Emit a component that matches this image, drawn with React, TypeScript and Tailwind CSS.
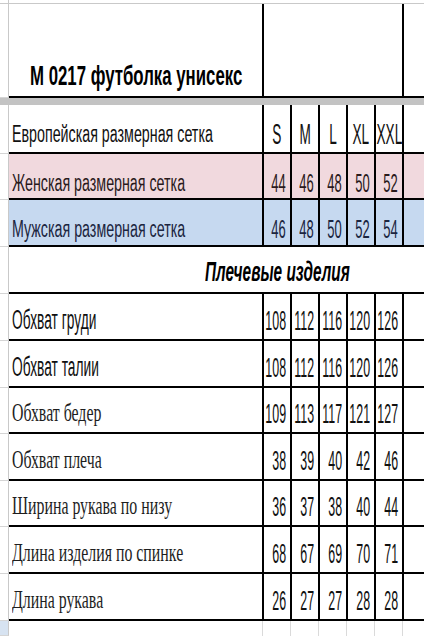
import React from "react";

type Kind = "arial" | "serif";

const SANS = "font-['Liberation_Sans',Arial,sans-serif]";
const SERIF = "font-['Liberation_Serif','Times_New_Roman',serif]";

function Gutter({ blue = false }: { blue?: boolean }) {
  return (
    <div
      className={
        "w-[9px] shrink-0 border-r border-r-[#c9c9c9] border-b border-b-[#d5d5d5] " +
        (blue ? "bg-[#d7e3f1]" : "bg-white")
      }
    />
  );
}

function NumCell({ v, pb, cls }: { v: string; pb: string; cls: string }) {
  return (
    <div className={"w-[28px] shrink-0 border-l-2 border-black flex items-end justify-end pr-[4px] " + pb}>
      <span className={"inline-block whitespace-nowrap leading-none origin-right " + cls}>{v}</span>
    </div>
  );
}

const dataRows: { label: string; kind: Kind; vals: string[]; h: string }[] = [
  { label: "Обхват груди", kind: "arial", vals: ["108", "112", "116", "120", "126"], h: "h-[47px]" },
  { label: "Обхват талии", kind: "arial", vals: ["108", "112", "116", "120", "126"], h: "h-[47px]" },
  { label: "Обхват бедер", kind: "serif", vals: ["109", "113", "117", "121", "127"], h: "h-[46px]" },
  { label: "Обхват плеча", kind: "serif", vals: ["38", "39", "40", "42", "46"], h: "h-[47px]" },
  { label: "Ширина рукава по низу", kind: "serif", vals: ["36", "37", "38", "40", "44"], h: "h-[46px]" },
  { label: "Длина изделия по спинке", kind: "serif", vals: ["68", "67", "69", "70", "71"], h: "h-[47px]" },
  { label: "Длина рукава", kind: "serif", vals: ["26", "27", "27", "28", "28"], h: "h-[47px]" },
];

export default function App() {
  return (
    <div className={"w-[424px] h-[636px] overflow-hidden bg-white text-[#111] " + SANS}>
      {/* top grid line */}
      <div className="h-[3px] flex">
        <div className="w-[9px] border-r border-r-[#c9c9c9]" />
      </div>
      <div className="h-px bg-[#c9c9c9]" />

      {/* title row */}
      <div className="flex h-[94px]">
        <Gutter />
        <div className="flex flex-1 border-b-2 border-black">
          <div className="w-[253px] shrink-0 flex items-end pl-[21px] pb-[6px]">
            <span className="inline-block whitespace-nowrap leading-none origin-left scale-x-[0.6] text-[28px] font-bold text-black">
              M 0217 футболка унисекс
            </span>
          </div>
          <div className="w-[140px] shrink-0 border-l-2 border-black" />
          <div className="flex-1 border-l-2 border-black" />
        </div>
      </div>

      {/* gray separator band */}
      <div className="h-[7px] bg-[#c3c3c3]" />

      {/* European sizes */}
      <div className="flex h-[49px]">
        <Gutter />
        <div className="flex flex-1 border-b-2 border-black">
          <div className="w-[253px] shrink-0 flex items-end pl-[3px] pb-[6px]">
            <span className="inline-block whitespace-nowrap leading-none origin-left scale-x-[0.62] text-[23px]">
              Европейская размерная сетка
            </span>
          </div>
          {["S", "M", "L", "XL", "XXL"].map((s) => (
            <div key={s} className="w-[28px] shrink-0 border-l-2 border-black flex items-end justify-center pb-[3px]">
              <span className="inline-block whitespace-nowrap leading-none origin-center scale-x-[0.47] text-[29px]">
                {s}
              </span>
            </div>
          ))}
          <div className="flex-1 border-l-2 border-black" />
        </div>
      </div>

      {/* Women */}
      <div className="flex h-[46px]">
        <Gutter />
        <div className="flex flex-1 border-b-2 border-black bg-[#f1d9de] text-[#2a1a1c]">
          <div className="w-[253px] shrink-0 flex items-end pl-[3px] pb-[3px]">
            <span className="inline-block whitespace-nowrap leading-none origin-left scale-x-[0.62] text-[23px]">
              Женская размерная сетка
            </span>
          </div>
          {["44", "46", "48", "50", "52"].map((v, i) => (
            <NumCell key={i} v={v} pb="pb-[2px]" cls="scale-x-[0.52] text-[25px]" />
          ))}
          <div className="flex-1 border-l-2 border-black" />
        </div>
      </div>

      {/* Men */}
      <div className="flex h-[47px]">
        <Gutter />
        <div className="flex flex-1 border-b-2 border-black bg-[#c6d9f0] text-[#1b2540]">
          <div className="w-[253px] shrink-0 flex items-end pl-[3px] pb-[4px]">
            <span className="inline-block whitespace-nowrap leading-none origin-left scale-x-[0.62] text-[23px]">
              Мужская размерная сетка
            </span>
          </div>
          {["46", "48", "50", "52", "54"].map((v, i) => (
            <NumCell key={i} v={v} pb="pb-[3px]" cls="scale-x-[0.52] text-[25px]" />
          ))}
          <div className="flex-1 border-l-2 border-black" />
        </div>
      </div>

      {/* Section header */}
      <div className="flex h-[47px]">
        <Gutter />
        <div className="flex flex-1 items-end border-b-2 border-black pl-[196px] pb-[6px]">
          <span className="inline-block whitespace-nowrap leading-none origin-left scale-x-[0.57] text-[27px] font-bold italic text-black">
            Плечевые изделия
          </span>
        </div>
      </div>

      {/* Data rows */}
      {dataRows.map((r) => (
        <div key={r.label} className={"flex " + r.h}>
          <Gutter />
          <div className="flex flex-1 border-b-2 border-black">
            {r.kind === "arial" ? (
              <div className="w-[253px] shrink-0 flex items-end pl-[3px] pb-[5px]">
                <span className="inline-block whitespace-nowrap leading-none origin-left scale-x-[0.51] text-[27px]">
                  {r.label}
                </span>
              </div>
            ) : (
              <div className={"w-[253px] shrink-0 flex items-end pl-[3px] pb-[6px] text-[#1e1e1e] " + SERIF}>
                <span className="inline-block whitespace-nowrap leading-none origin-left scale-x-[0.61] text-[26px]">
                  {r.label}
                </span>
              </div>
            )}
            {r.vals.map((v, i) => (
              <NumCell key={i} v={v} pb="pb-[4px]" cls="scale-x-[0.46] text-[27px]" />
            ))}
            <div className="flex-1 border-l-2 border-black" />
          </div>
        </div>
      ))}

      {/* partial empty row */}
      <div className="flex h-[15px]">
        <Gutter blue />
        <div className="flex flex-1">
          <div className="w-[253px] shrink-0" />
          {[0, 1, 2, 3, 4].map((i) => (
            <div key={i} className="w-[28px] shrink-0 border-l border-[#dadada]" />
          ))}
          <div className="flex-1 border-l border-[#dadada]" />
        </div>
      </div>
    </div>
  );
}
